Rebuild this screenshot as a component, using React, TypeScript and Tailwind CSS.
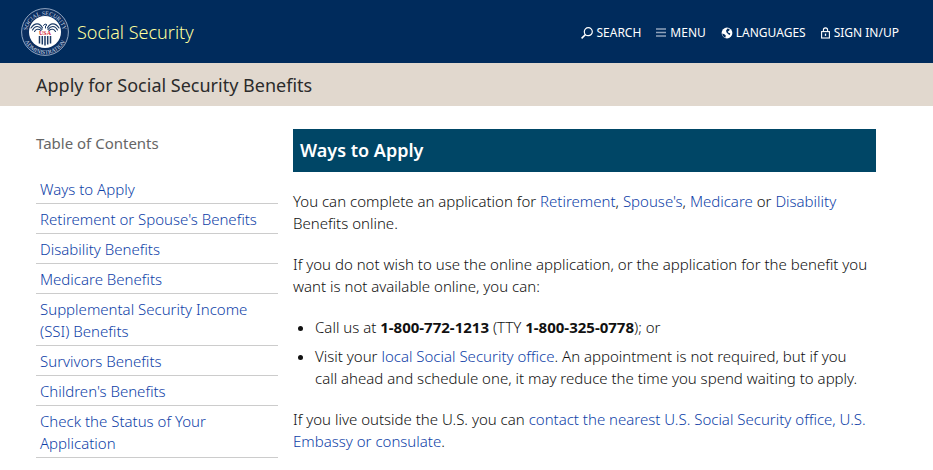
import type { ReactNode } from "react";

const contents = [
  "Ways to Apply",
  "Retirement or Spouse's Benefits",
  "Disability Benefits",
  "Medicare Benefits",
  "Supplemental Security Income (SSI) Benefits",
  "Survivors Benefits",
  "Children's Benefits",
  "Check the Status of Your Application",
];

function Seal() {
  return (
    <svg viewBox="0 0 48 48" className="size-12 shrink-0" aria-hidden="true">
      <defs>
        <path id="seal-top" d="M6.1 28a18.1 18.1 0 1 1 35.8 0" />
        <path id="seal-bottom" d="M1.8 24a22.2 22.2 0 0 0 44.4 0" />
      </defs>
      <circle cx="24" cy="24" r="23.4" fill="#0b2f60" stroke="#b9c7da" strokeWidth="0.8" />
      <g fill="#d5deea" fontSize="5.8" fontFamily="Liberation Serif, serif" textAnchor="middle">
        <text>
          <textPath href="#seal-top" startOffset="50%">SOCIAL SECURITY</textPath>
        </text>
        <text>
          <textPath href="#seal-bottom" startOffset="50%">ADMINISTRATION</textPath>
        </text>
      </g>
      <circle cx="24" cy="24" r="16" fill="#ffffff" />
      <g fill="none" stroke="#1b3a66" strokeLinecap="round">
        <path d="M21.5 20C19 15 14 14 10 20M21 21.5c-3-4-7-4-9.5.5M20 22.5c-2.5-2-5-1.5-6.5 1" strokeWidth="1.1" />
        <path d="M26.5 20C29 15 34 14 38 20M27 21.5c3-4 7-4 9.5.5M28 22.5c2.5-2 5-1.5 6.5 1" strokeWidth="1.1" />
        <path d="M22.5 17.5c.5-1.5 2.5-2 3.5-.5l-1.5 1V20" strokeWidth="1" />
      </g>
      <path d="M18.5 28v7.5M21.3 28v8.5M24 28v9.5M26.7 28v8.5M29.5 28v7.5" stroke="#1b3a66" strokeWidth="1.5" />
      <text x="24" y="27" fill="#d3222f" fontSize="6" fontWeight="700" fontFamily="Liberation Serif, serif" textAnchor="middle">
        USA
      </text>
    </svg>
  );
}

function SearchIcon() {
  return (
    <svg viewBox="0 0 12 12" className="size-3" fill="none" stroke="currentColor" aria-hidden="true">
      <circle cx="7.3" cy="4.7" r="4" strokeWidth="1.2" />
      <path d="M4.4 7.6.6 11.4" strokeWidth="1.5" />
    </svg>
  );
}

function MenuIcon() {
  return (
    <svg viewBox="0 0 10 9" className="h-[9px] w-[10px]" stroke="#8fa2bb" aria-hidden="true">
      <path d="M0 1h10M0 4.5h10M0 8h10" strokeWidth="1.6" />
    </svg>
  );
}

function GlobeIcon() {
  return (
    <svg viewBox="0 0 12 12" className="size-3" aria-hidden="true">
      <circle cx="6" cy="6" r="5.4" fill="#ffffff" />
      <path d="M6.4 1.6 8.6 1.9 8.2 3.7 6.8 4.6 7.4 5.7 9.2 6.2 8.9 8 7.3 7.2 5.6 5.6 5 3.8z" fill="#002b5c" />
      <path d="M1.3 6.5 3.4 7.2 4.8 8.6 4.4 10.7 2.6 9.7 1.5 8.2z" fill="#002b5c" />
    </svg>
  );
}

function LockIcon() {
  return (
    <svg viewBox="0 0 9 12" className="h-3 w-[9px]" fill="none" stroke="currentColor" aria-hidden="true">
      <rect x="0.6" y="4.6" width="7.8" height="6.4" strokeWidth="1.1" />
      <path d="M2.4 4.6V3a2.1 2.1 0 0 1 4.2 0v1.6" strokeWidth="1.1" />
      <path d="M4.5 6.6v2.3" strokeWidth="1.3" />
    </svg>
  );
}

function NavLink({ icon, gap, children }: { icon: ReactNode; gap: string; children: ReactNode }) {
  return (
    <a href="#" className={`flex items-center whitespace-nowrap ${gap}`}>
      {icon}
      {children}
    </a>
  );
}

function TextLink({ children }: { children: ReactNode }) {
  return (
    <a href="#" className="text-[#0f3fa8]">
      {children}
    </a>
  );
}

export default function App() {
  return (
    <div className="min-h-screen bg-white font-['Noto_Sans',sans-serif] text-[15px] leading-[22px] font-light text-[#111111]">
      <header className="flex items-center justify-between bg-[#002b5c] py-2 pr-[34px] pl-[21px] leading-[47px]">
        <a href="#" className="flex h-[47px] items-center gap-2 text-lg text-[#ffff9c]">
          <Seal />
          Social Security
        </a>
        <nav aria-label="Site" className="flex items-center gap-[15px] pt-0.5 text-xs font-normal text-white">
          <NavLink icon={<SearchIcon />} gap="gap-[3px]">SEARCH</NavLink>
          <NavLink icon={<MenuIcon />} gap="gap-1">MENU</NavLink>
          <NavLink icon={<GlobeIcon />} gap="gap-[3px]">LANGUAGES</NavLink>
          <NavLink icon={<LockIcon />} gap="gap-1">SIGN IN/UP</NavLink>
        </nav>
      </header>
      <div className="bg-[#e1d8ce] px-9 pt-[9px] pb-[7px]">
        <h1 className="text-lg leading-[27px] font-normal text-[#2b2b2b]">Apply for Social Security Benefits</h1>
      </div>
      <div className="flex gap-[15px] pt-[23px] pr-[57px] pl-9">
        <aside className="w-[242px] shrink-0 pt-[3px]">
          <h2 className="mb-5 font-normal text-[#666666]">Table of Contents</h2>
          <ul>
            {contents.map((item) => (
              <li key={item} className="border-b border-[#cccccc] px-1 pt-1 pb-[3px]">
                <TextLink>{item}</TextLink>
              </li>
            ))}
          </ul>
        </aside>
        <main className="min-w-0 flex-1">
          <h2 className="mb-[18px] bg-[#004666] px-[7px] py-2 text-lg leading-[27px] font-semibold text-white">Ways to Apply</h2>
          <p className="mb-[19px]">
            You can complete an application for <TextLink>Retirement</TextLink>, <TextLink>Spouse's</TextLink>,{" "}
            <TextLink>Medicare</TextLink> or <TextLink>Disability</TextLink> Benefits online.
          </p>
          <p className="mb-[19px]">
            If you do not wish to use the online application, or the application for the benefit you want is not
            available online, you can:
          </p>
          <ul className="mb-[19px] list-disc space-y-[7px] pr-2 pl-[22px]">
            <li>
              Call us at <strong className="font-bold">1-800-772-1213</strong> (TTY{" "}
              <strong className="font-bold">1-800-325-0778</strong>); or
            </li>
            <li>
              Visit your <TextLink>local Social Security office</TextLink>. An appointment is not required, but if you
              call ahead and schedule one, it may reduce the time you spend waiting to apply.
            </li>
          </ul>
          <p>
            If you live outside the U.S. you can{" "}
            <TextLink>contact the nearest U.S. Social Security office, U.S. Embassy or consulate</TextLink>.
          </p>
        </main>
      </div>
    </div>
  );
}
